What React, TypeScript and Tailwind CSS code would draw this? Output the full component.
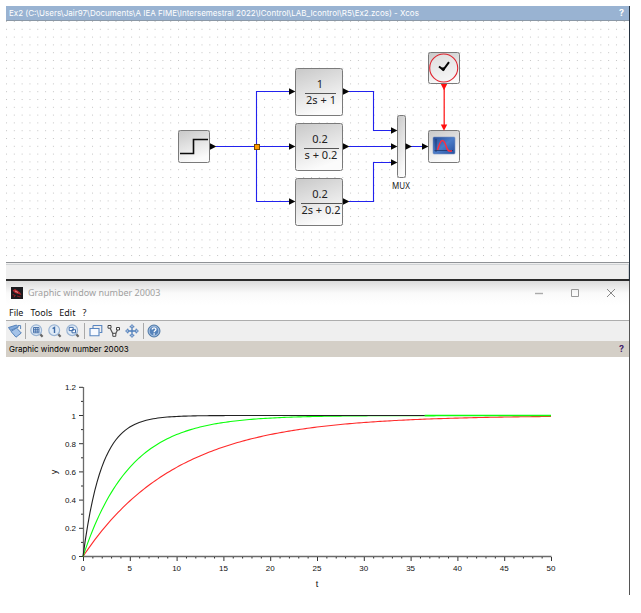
import type { ReactNode } from "react";

const UI_FONT = "font-['Noto_Sans','Open_Sans',sans-serif]";
const TITLE_FONT = "font-[Inter,'Liberation_Sans',sans-serif]";

/* ---------- Xcos diagram ---------- */

function OutPort({ x, y }: { x: number; y: number }) {
  return <path d={`M${x} ${y - 3.2}L${x + 6.4} ${y}L${x} ${y + 3.2}Z`} fill="#050505" />;
}

function DownPort({ x, y }: { x: number; y: number }) {
  return <path d={`M${x - 3.2} ${y}H${x + 3.2}L${x} ${y + 6.2}Z`} fill="#ff1010" />;
}

function Block({ x, y, w, h }: { x: number; y: number; w: number; h: number }) {
  return <rect x={x} y={y} width={w} height={h} rx="2" fill="url(#face)" stroke="#7a7a7a" />;
}

type Fraction = { y: number; top: string; bottom: string; from: number; to: number };

const FRACTIONS: Fraction[] = [
  { y: 68, top: "1", bottom: "2s + 1", from: 305, to: 336 },
  { y: 123, top: "0.2", bottom: "s + 0.2", from: 304, to: 339 },
  { y: 178, top: "0.2", bottom: "2s + 0.2", from: 301, to: 342 },
];

function TransferBlock({ y, top, bottom, from, to }: Fraction) {
  return (
    <g>
      <Block x={295.5} y={y + 0.5} w={47} h={47} />
      <text x="320" y={y + 20} textAnchor="middle" fontSize="11" fill="#222">{top}</text>
      <path d={`M${from} ${y + 25.5}H${to}`} stroke="#555" />
      <text x="321" y={y + 36} textAnchor="middle" fontSize="11" fill="#222">{bottom}</text>
      <OutPort x={289} y={y + 23.5} />
      <OutPort x={343} y={y + 23.5} />
    </g>
  );
}

function Diagram() {
  return (
    <svg viewBox="6 21 623 241" className="block h-auto w-full bg-white font-['Noto_Sans','Open_Sans',sans-serif]" role="img" aria-label="Block diagram">
      <defs>
        <pattern id="dots" x="6" y="21" width="7.82" height="7.8" patternUnits="userSpaceOnUse">
          <rect width="1" height="1" fill="#c4c4c4" />
        </pattern>
        <linearGradient id="face" x1="0" y1="0" x2="0.35" y2="1">
          <stop offset="0" stopColor="#c8c8c8" />
          <stop offset="1" stopColor="#fbfbfb" />
        </linearGradient>
        <linearGradient id="screen" x1="0" y1="0" x2="1" y2="1">
          <stop offset="0" stopColor="#234a96" />
          <stop offset="0.5" stopColor="#4a7cc8" />
          <stop offset="1" stopColor="#264f9e" />
        </linearGradient>
      </defs>
      <rect x="6" y="21" width="623" height="241" fill="url(#dots)" />

      <g fill="none" stroke="#2222ee" strokeWidth="1.1">
        <path d="M216 146.5H290M256.5 146.5V91.5H290M256.5 146.5V201.5H290" />
        <path d="M349 91.5H373.5V130.5H392M349 146.5H392M349 201.5H373.5V162.5H392M411 146.5H423" />
      </g>
      <path d="M444.2 86V127" stroke="#ff2020" strokeWidth="1.3" />

      <Block x={178.5} y={130.5} w={31} h={32} />
      <path d="M180 153.5H193.5V139.5H208" fill="none" stroke="#0b0b0b" strokeWidth="1.6" />
      <OutPort x={210} y={146.5} />
      <rect x="254.5" y="144.5" width="5" height="5" fill="#ff9c00" stroke="#7a4a00" />

      {FRACTIONS.map((f) => <TransferBlock key={f.y} {...f} />)}

      <Block x={397.5} y={115.5} w={8} h={62} />
      <OutPort x={391} y={130.5} />
      <OutPort x={391} y={146.5} />
      <OutPort x={391} y={162.5} />
      <OutPort x={405.5} y={146.5} />
      <text x="401" y="189" textAnchor="middle" fontSize="8" fill="#222">MUX</text>

      <Block x={428.5} y={130.5} w={31} h={32} />
      <OutPort x={422} y={146.5} />
      <rect x="433" y="137" width="22" height="17" rx="1" fill="url(#screen)" stroke="#7d95c4" strokeWidth="0.6" />
      <path d="M436 139V152M434.5 150.5H453" stroke="#1c3468" strokeWidth="0.8" />
      <path d="M437.5 150C439.5 145 440 140.5 442.5 140.5S446 147 447.5 149.5S450 151 452 151" fill="none" stroke="#ff2c40" strokeWidth="1.5" />

      <Block x={428.5} y={52.5} w={31} h={31} />
      <circle cx="443.7" cy="68" r="14" fill="#efefef" fillOpacity="0.5" stroke="#e02530" strokeWidth="1.1" />
      <path d="M439 66.5L443.3 69.8L449 62.2" fill="none" stroke="#050505" strokeWidth="2" />
      <circle cx="443.2" cy="69" r="1.7" fill="#050505" />
      <DownPort x={444} y={84} />
      <DownPort x={444} y={124.5} />
    </svg>
  );
}

/* ---------- Step response plot ---------- */

const X0 = 83;
const Y0 = 556.5;
const PX_PER_T = 9.36;
const PX_PER_Y = 141;

function response(tau: number, start: number, end: number) {
  const points: string[] = [];
  for (let t = start; t <= end + 0.01; t += 0.25) {
    points.push(`${(X0 + t * PX_PER_T).toFixed(2)},${(Y0 - PX_PER_Y * (1 - Math.exp(-t / tau))).toFixed(2)}`);
  }
  return points.join(" ");
}

function range(n: number) {
  return Array.from({ length: n }, (_, i) => i);
}

function Plot() {
  return (
    <svg viewBox="6 357 623 238" className="block h-auto w-full bg-white font-['Liberation_Sans',Arial,sans-serif]" role="img" aria-label="Step responses, y against t">
      <path d="M83.5 387V556.5H551.5" fill="none" stroke="#6a6a6a" strokeWidth="1.3" />
      {range(51).map((t) => (
        <path key={t} d={`M${X0 + 0.5 + t * PX_PER_T} 557V${t % 5 === 0 ? 561 : 558.5}`} stroke="#333" />
      ))}
      {range(13).map((k) => (
        <path key={k} d={`M83 ${Y0 - k * 14.1}H${k % 2 === 0 ? 79 : 81}`} stroke="#333" />
      ))}
      {range(11).map((k) => (
        <text key={k} x={X0 + k * 5 * PX_PER_T} y="571" textAnchor="middle" fontSize="8" fill="#111">{k * 5}</text>
      ))}
      {range(7).map((k) => (
        <text key={k} x="76" y={Y0 - k * 28.2 + 3} textAnchor="end" fontSize="8" fill="#111">{String(k * 2 / 10)}</text>
      ))}
      <text x="317" y="587" textAnchor="middle" fontSize="9" fill="#111">t</text>
      <text x="57" y="472" textAnchor="middle" fontSize="9" fill="#111" transform="rotate(-90 57 472)">y</text>
      <g fill="none" strokeWidth="1.1">
        <polyline points={response(10, 0, 50)} stroke="#ff2a2a" />
        <polyline points={response(5, 0, 36.5)} stroke="#0cff0c" />
        <polyline points={response(5, 36.5, 50)} stroke="#0cff0c" strokeWidth="1.6" />
        <polyline points={response(2, 0, 36.5)} stroke="#222" />
      </g>
    </svg>
  );
}

/* ---------- Toolbar ---------- */

function ToolButton({ label, children }: { label: string; children: ReactNode }) {
  return (
    <button type="button" aria-label={label} className="flex h-4 w-[18px] items-center justify-center">
      <svg viewBox="0 0 14 14" className="size-[14px]" fill="none">{children}</svg>
    </button>
  );
}

function Lens({ children }: { children: ReactNode }) {
  return (
    <>
      <path d="M9.8 9.8L12.6 12.8" stroke="#666" strokeWidth="2.2" />
      <circle cx="6.2" cy="6.2" r="5.4" fill="#dfeaf6" stroke="#9ab4d3" strokeWidth="1.2" />
      {children}
    </>
  );
}

function Toolbar() {
  const group = "flex border-r border-[#a9a9a9] px-[2px]";
  return (
    <div className="flex h-5 items-center bg-[#efefef]">
      <div className="flex w-5 border-r border-[#a9a9a9]">
        <ToolButton label="Rotate">
          <path d="M0.5 3.5L8.5 1L10.5 3L2.5 6.5Z" fill="#84abdc" stroke="#4a79b4" strokeWidth="0.9" />
          <path d="M3 7.5L8.5 4L13.3 9L8 13.2Z" fill="#a5c3e8" stroke="#4a79b4" strokeWidth="0.9" />
          <path d="M10 1.5L12.6 1.6V5" stroke="#4a79b4" strokeWidth="0.9" />
        </ToolButton>
      </div>
      <div className={group}>
        <ToolButton label="Zoom area">
          <Lens><path d="M3.5 3.5H9V8.8H3.5ZM3.5 5.3H9M3.5 7.1H9M5.3 3.5V8.8M7.2 3.5V8.8" fill="#fff" stroke="#3f6ca8" strokeWidth="0.9" /></Lens>
        </ToolButton>
        <ToolButton label="Original view">
          <Lens><path d="M4.6 4.6L6.5 3.4V9" stroke="#3f6ca8" strokeWidth="1.4" /></Lens>
        </ToolButton>
        <ToolButton label="Zoom fit">
          <Lens><path d="M3.2 3.4H7.2V6.6H3.2ZM6 5.7H9.5V8.8H6Z" fill="#fff" stroke="#3f6ca8" /></Lens>
        </ToolButton>
      </div>
      <div className={group}>
        <ToolButton label="Rotation 3D">
          <path d="M4 1.5H12.8V8.5H10.5M4 1.5V4" stroke="#5a86c0" strokeWidth="1.1" />
          <path d="M1 4.5H10V11.8H1Z" fill="#f7faff" stroke="#5a86c0" strokeWidth="1.1" />
        </ToolButton>
        <ToolButton label="Datatips">
          <path d="M3 4L6 10M8.5 10L10.5 6" stroke="#555" strokeWidth="1.2" />
          <path d="M1 1.5H4V4.2H1ZM5.8 9.3H8.8V12.3H5.8ZM9.5 3.5H12.5V6H9.5Z" fill="#fff" stroke="#444" />
        </ToolButton>
        <ToolButton label="Pan">
          <path d="M7 1V13M1 7H13" stroke="#4c7dbb" strokeWidth="1.3" />
          <path d="M4.8 3L7 0.6L9.2 3ZM4.8 11L7 13.4L9.2 11ZM3 4.8L0.6 7L3 9.2ZM11 4.8L13.4 7L11 9.2Z" fill="#efefef" stroke="#4c7dbb" />
        </ToolButton>
      </div>
      <div className="flex px-px">
        <ToolButton label="Help">
          <circle cx="7" cy="7" r="6" fill="#5583bb" stroke="#45709f" strokeWidth="0.9" />
          <circle cx="7" cy="7" r="4.9" stroke="#c5d8ee" strokeWidth="0.8" />
          <path d="M5.2 5.6C5.2 3.3 9 3.4 8.9 5.5C8.8 6.8 7.1 6.8 7.1 8.3M7.1 9.3V10.7" stroke="#fff" strokeWidth="1.3" />
        </ToolButton>
      </div>
    </div>
  );
}

/* ---------- Windows ---------- */

function XcosWindow() {
  return (
    <section className={`border-r border-[#26323f] ${TITLE_FONT}`}>
      <header className="flex h-[15px] items-center justify-between border-b border-[#8b98a6] bg-[#99b3d2] pl-[3px] pr-[5px] text-[8px] leading-[14px] text-white">
        <h1 className="whitespace-nowrap">
          {"Ex2 (C:\\Users\\Jair97\\Documents\\A IEA FIME\\Intersemestral 2022\\IControl\\LAB_Icontrol\\R5\\Ex2.zcos) - Xcos"}
        </h1>
        <button type="button" aria-label="Diagram help" className="text-[9px] font-bold">?</button>
      </header>
      <Diagram />
      <footer className="h-[17px] border-t border-[#8f9296] bg-[#efefef] pt-px">
        <div className="h-[15px] border-r border-t border-[#cfd2d4]" />
      </footer>
      <div className="h-[2px] bg-[#2b2b2b]" />
    </section>
  );
}

function GraphicWindow() {
  return (
    <section className="border-r border-[#555]">
      <header className={`flex h-[24px] items-center bg-linear-to-b from-[#dcdcdc] via-[#fafafa] via-50% to-white pl-[5px] text-[#a0a0a0] ${UI_FONT}`}>
        <svg viewBox="0 0 12 12" className="size-3" aria-hidden="true">
          <rect width="12" height="12" fill="#1b1b1f" />
          <path d="M1.5 3.5L4 2L6.5 3.5L9 5.5L10.5 8L7.5 7L4 6Z" fill="#b3242c" />
          <path d="M1.5 7.5L4 8.5L3 10M6 9L9.5 10" stroke="#8b1d25" strokeWidth="1.2" />
          <path d="M4 4L7 5.5" stroke="#e8b0a8" strokeWidth="0.8" />
        </svg>
        <h2 className="ml-[5px] grow whitespace-nowrap text-[9px] leading-3">Graphic window number 20003</h2>
        <div className="flex">
          <button type="button" aria-label="Minimize" className="flex h-6 w-9 items-center justify-center">
            <svg viewBox="0 0 10 10" className="size-[10px]"><path d="M1 5.5H9" stroke="#aaa" strokeWidth="1.4" /></svg>
          </button>
          <button type="button" aria-label="Maximize" className="flex h-6 w-9 items-center justify-center">
            <svg viewBox="0 0 10 10" className="size-[10px]"><path d="M1.5 1.5H8.5V8.5H1.5Z" fill="none" stroke="#999" /></svg>
          </button>
          <button type="button" aria-label="Close" className="flex h-6 w-9 items-center justify-center">
            <svg viewBox="0 0 10 10" className="size-[10px]"><path d="M1 1L9 9M9 1L1 9" stroke="#888" /></svg>
          </button>
        </div>
      </header>
      <nav className={`flex h-[16px] items-center gap-[7px] border-b border-[#adadad] bg-white pl-[3px] text-[9px] leading-3 text-[#111] ${UI_FONT}`}>
        <button type="button">File</button>
        <button type="button">Tools</button>
        <button type="button">Edit</button>
        <button type="button">?</button>
      </nav>
      <Toolbar />
      <header className={`flex h-[16px] items-center justify-between bg-[#d4cfc7] pl-[3px] pr-[5px] text-[8px] leading-3 text-black ${TITLE_FONT}`}>
        <h3 className="whitespace-nowrap">Graphic window number 20003</h3>
        <button type="button" aria-label="Figure help" className="text-[9px] font-bold text-[#45246b]">?</button>
      </header>
      <Plot />
    </section>
  );
}

export default function App() {
  return (
    <main className="bg-white pb-[18px] pl-[6px] pr-[11px] pt-[6px]">
      <XcosWindow />
      <GraphicWindow />
    </main>
  );
}
